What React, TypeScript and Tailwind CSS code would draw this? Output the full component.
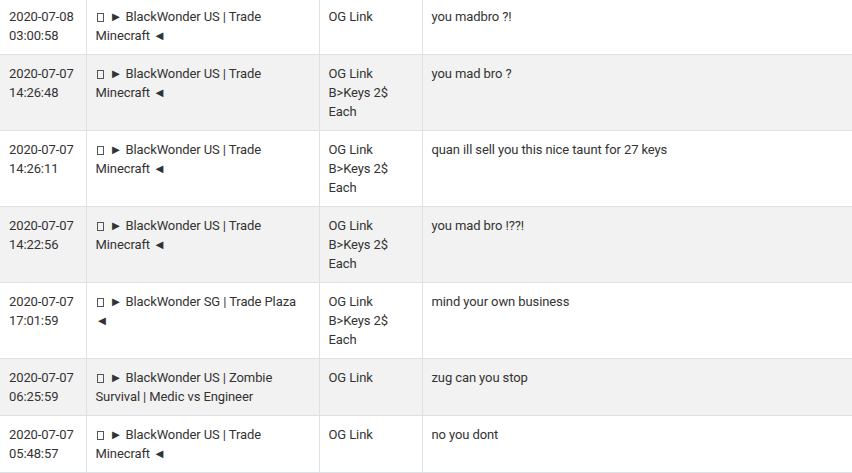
import React from "react";

type Row = {
  time: [string, string];
  server: string;
  name: string[];
  message: string;
};

const rows: Row[] = [
  { time: ["2020-07-08", "03:00:58"], server: "BlackWonder US | Trade Minecraft ◄", name: ["OG Link"], message: "you madbro ?!" },
  { time: ["2020-07-07", "14:26:48"], server: "BlackWonder US | Trade Minecraft ◄", name: ["OG Link", "B>Keys 2$", "Each"], message: "you mad bro ?" },
  { time: ["2020-07-07", "14:26:11"], server: "BlackWonder US | Trade Minecraft ◄", name: ["OG Link", "B>Keys 2$", "Each"], message: "quan ill sell you this nice taunt for 27 keys" },
  { time: ["2020-07-07", "14:22:56"], server: "BlackWonder US | Trade Minecraft ◄", name: ["OG Link", "B>Keys 2$", "Each"], message: "you mad bro !??!" },
  { time: ["2020-07-07", "17:01:59"], server: "BlackWonder SG | Trade Plaza ◄", name: ["OG Link", "B>Keys 2$", "Each"], message: "mind your own business" },
  { time: ["2020-07-07", "06:25:59"], server: "BlackWonder US | Zombie Survival | Medic vs Engineer", name: ["OG Link"], message: "zug can you stop" },
  { time: ["2020-07-07", "05:48:57"], server: "BlackWonder US | Trade Minecraft ◄", name: ["OG Link"], message: "no you dont" },
];

// missing-glyph box shown before the server name
const Tofu = () => (
  <span className="mr-[6px] ml-px inline-block h-[9px] w-[7px] border border-[#555] align-[-1px]" />
);

export default function App() {
  return (
    <div className="h-[473px] w-[852px] overflow-hidden bg-white font-['Roboto',sans-serif] text-[13px] leading-[19px] tracking-[-0.1px] text-[#333]">
      <table className="-mt-[3px] w-[852px] table-fixed border-collapse">
        <colgroup>
          <col className="w-[86px]" />
          <col className="w-[233px]" />
          <col className="w-[103px]" />
          <col />
        </colgroup>
        <tbody>
          {rows.map((r, i) => (
            <tr key={i} className={i % 2 === 1 ? "bg-[#f2f2f2]" : "bg-white"}>
              <td className="border-y border-r border-[#dfdfe6] px-[9px] py-[9px] align-top">
                {r.time[0]}
                <br />
                {r.time[1]}
              </td>
              <td className="border border-[#dfdfe6] px-[9px] py-[9px] align-top">
                <Tofu />► {r.server}
              </td>
              <td className="border border-[#dfdfe6] px-[9px] py-[9px] align-top">
                {r.name.map((n, j) => (
                  <div key={j}>{n}</div>
                ))}
              </td>
              <td className="border-y border-l border-[#dfdfe6] px-[9px] py-[9px] align-top">
                {r.message}
              </td>
            </tr>
          ))}
        </tbody>
      </table>
    </div>
  );
}
